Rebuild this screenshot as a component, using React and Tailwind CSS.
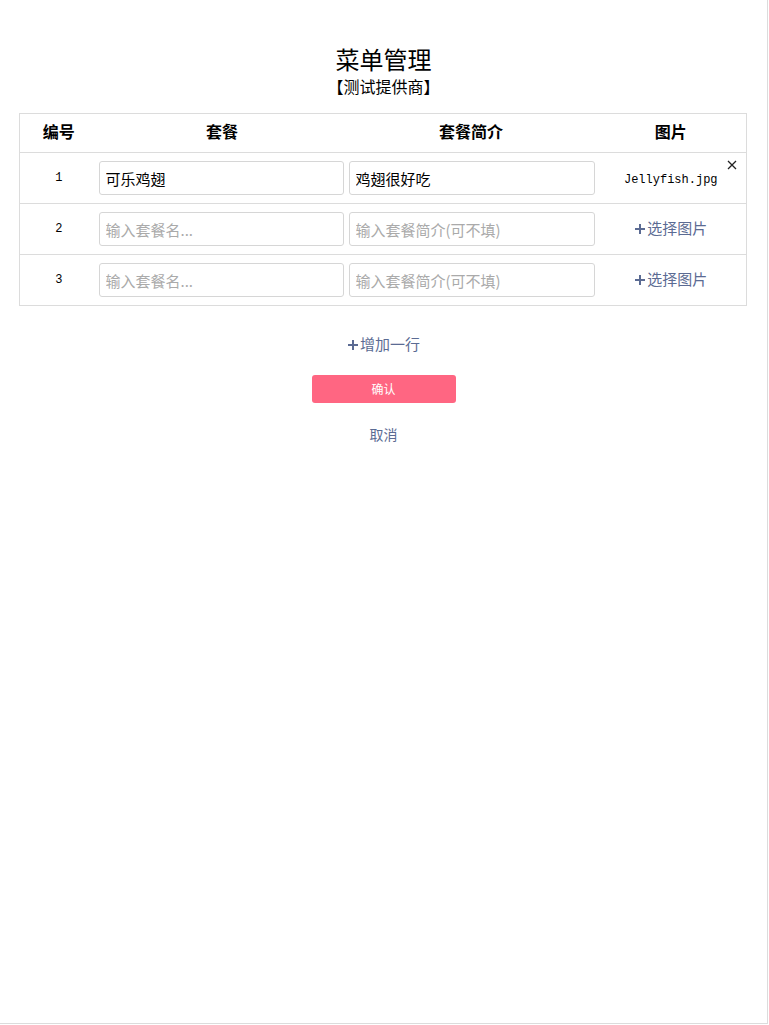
import { useState } from "react";

const rowsInit = [
  { id: 1, name: "可乐鸡翅", desc: "鸡翅很好吃", img: "Jellyfish.jpg" },
  { id: 2, name: "", desc: "", img: "" },
  { id: 3, name: "", desc: "", img: "" },
];

function PlusIcon() {
  return (
    <svg width="12" height="12" viewBox="0 0 12 12" className="inline-block mr-[1px] -mt-[2px]">
      <path d="M6 1v10M1 6h10" stroke="#5b6b93" strokeWidth="2" />
    </svg>
  );
}

export default function App() {
  const [rows, setRows] = useState(rowsInit);

  const update = (id, key, value) =>
    setRows(rows.map((r) => (r.id === id ? { ...r, [key]: value } : r)));

  return (
    <div className="w-[768px] h-[1024px] border-r border-b border-[#dcdcdc] bg-white font-['Liberation_Serif','Noto_Sans_CJK_SC',serif] text-black">
      <div className="pt-[46px] text-center">
        <h1 className="text-[24px] leading-[30px]">菜单管理</h1>
        <p className="mt-[2px] text-[16px] leading-[20px]">【测试提供商】</p>
      </div>

      <div className="px-[19px] mt-[15px]">
        <table className="w-[728px] border-collapse border border-[#dcdcdc]">
          <thead>
            <tr className="h-[39px]">
              <th className="w-[78px] text-[16px] font-bold">编号</th>
              <th className="w-[249px] text-[16px] font-bold">套餐</th>
              <th className="w-[249px] text-[16px] font-bold">套餐简介</th>
              <th className="text-[16px] font-bold">图片</th>
            </tr>
          </thead>
          <tbody>
            {rows.map((r) => (
              <tr key={r.id} className="h-[51px] border-t border-[#dcdcdc]">
                <td className="text-center text-[12px] font-['Liberation_Mono',monospace]">{r.id}</td>
                <td className="pl-[1px] pr-[2px]">
                  <input
                    value={r.name}
                    onChange={(e) => update(r.id, "name", e.target.value)}
                    placeholder="输入套餐名..."
                    className="w-[245px] h-[34px] border border-[#d6d6d6] rounded-[3px] px-[6px] text-[15px] font-['Noto_Sans_CJK_SC',sans-serif] outline-none placeholder:text-[#aaaaaa]"
                  />
                </td>
                <td className="pl-[2px]">
                  <input
                    value={r.desc}
                    onChange={(e) => update(r.id, "desc", e.target.value)}
                    placeholder="输入套餐简介(可不填)"
                    className="w-[246px] h-[34px] border border-[#d6d6d6] rounded-[3px] px-[6px] text-[15px] font-['Noto_Sans_CJK_SC',sans-serif] outline-none placeholder:text-[#aaaaaa]"
                  />
                </td>
                <td className="relative text-center">
                  {r.img ? (
                    <>
                      <span className="text-[12px] font-['Liberation_Mono',monospace]">{r.img}</span>
                      <svg width="10" height="10" viewBox="0 0 10 10" className="absolute right-[9px] top-[7px]">
                        <path d="M1 1l8 8M9 1l-8 8" stroke="#222" strokeWidth="1.3" />
                      </svg>
                    </>
                  ) : (
                    <span className="text-[15px] text-[#5b6b93] font-['Noto_Sans_CJK_SC',sans-serif]">
                      <PlusIcon />
                      选择图片
                    </span>
                  )}
                </td>
              </tr>
            ))}
          </tbody>
        </table>
      </div>

      <div className="flex flex-col items-center font-['Noto_Sans_CJK_SC',sans-serif]">
        <button
          onClick={() => setRows([...rows, { id: rows.length + 1, name: "", desc: "", img: "" }])}
          className="mt-[27px] text-[15px] leading-[22px] text-[#5b6b93]"
        >
          <PlusIcon />
          增加一行
        </button>
        <button className="mt-[20px] w-[144px] h-[28px] rounded-[3px] bg-[#ff6682] text-white text-[12px]">
          确认
        </button>
        <button className="mt-[21px] text-[14px] leading-[20px] text-[#5b6b93]">取消</button>
      </div>
    </div>
  );
}
